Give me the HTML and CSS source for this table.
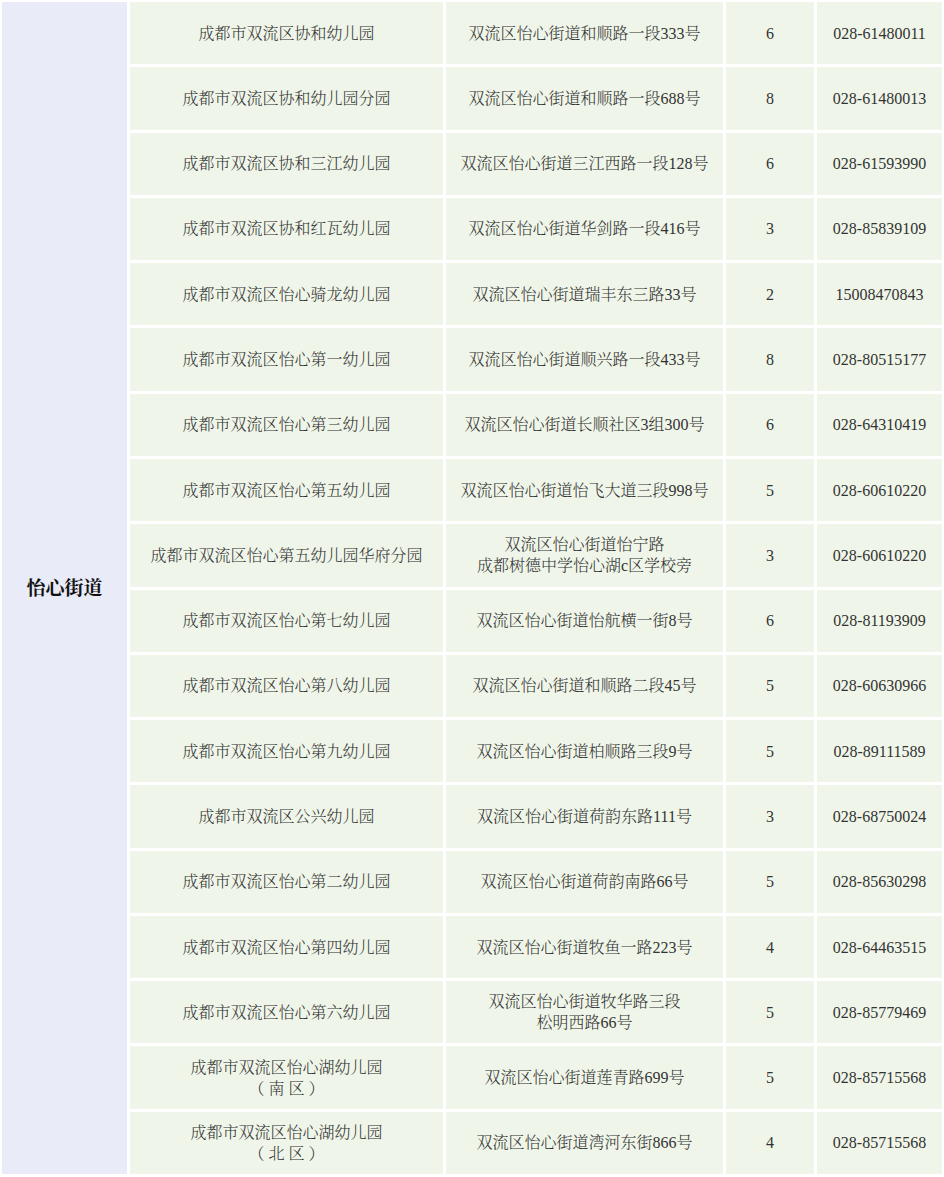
FILE: index.html
```html
<!DOCTYPE html>
<html lang="zh-CN">
<head>
<meta charset="utf-8">
<title>怡心街道幼儿园</title>
<link rel="stylesheet" href="styles.css">
</head>
<body>
<div class="grid">
  <div class="cell area">怡心街道</div>

  <div class="cell">成都市双流区协和幼儿园</div><div class="cell">双流区怡心街道和顺路一段333号</div><div class="cell">6</div><div class="cell">028-61480011</div>
  <div class="cell">成都市双流区协和幼儿园分园</div><div class="cell">双流区怡心街道和顺路一段688号</div><div class="cell">8</div><div class="cell">028-61480013</div>
  <div class="cell">成都市双流区协和三江幼儿园</div><div class="cell">双流区怡心街道三江西路一段128号</div><div class="cell">6</div><div class="cell">028-61593990</div>
  <div class="cell">成都市双流区协和红瓦幼儿园</div><div class="cell">双流区怡心街道华剑路一段416号</div><div class="cell">3</div><div class="cell">028-85839109</div>
  <div class="cell">成都市双流区怡心骑龙幼儿园</div><div class="cell">双流区怡心街道瑞丰东三路33号</div><div class="cell">2</div><div class="cell">15008470843</div>
  <div class="cell">成都市双流区怡心第一幼儿园</div><div class="cell">双流区怡心街道顺兴路一段433号</div><div class="cell">8</div><div class="cell">028-80515177</div>
  <div class="cell">成都市双流区怡心第三幼儿园</div><div class="cell">双流区怡心街道长顺社区3组300号</div><div class="cell">6</div><div class="cell">028-64310419</div>
  <div class="cell">成都市双流区怡心第五幼儿园</div><div class="cell">双流区怡心街道怡飞大道三段998号</div><div class="cell">5</div><div class="cell">028-60610220</div>
  <div class="cell">成都市双流区怡心第五幼儿园华府分园</div><div class="cell">双流区怡心街道怡宁路<br>成都树德中学怡心湖c区学校旁</div><div class="cell">3</div><div class="cell">028-60610220</div>
  <div class="cell">成都市双流区怡心第七幼儿园</div><div class="cell">双流区怡心街道怡航横一街8号</div><div class="cell">6</div><div class="cell">028-81193909</div>
  <div class="cell">成都市双流区怡心第八幼儿园</div><div class="cell">双流区怡心街道和顺路二段45号</div><div class="cell">5</div><div class="cell">028-60630966</div>
  <div class="cell">成都市双流区怡心第九幼儿园</div><div class="cell">双流区怡心街道柏顺路三段9号</div><div class="cell">5</div><div class="cell">028-89111589</div>
  <div class="cell">成都市双流区公兴幼儿园</div><div class="cell">双流区怡心街道荷韵东路111号</div><div class="cell">3</div><div class="cell">028-68750024</div>
  <div class="cell">成都市双流区怡心第二幼儿园</div><div class="cell">双流区怡心街道荷韵南路66号</div><div class="cell">5</div><div class="cell">028-85630298</div>
  <div class="cell">成都市双流区怡心第四幼儿园</div><div class="cell">双流区怡心街道牧鱼一路223号</div><div class="cell">4</div><div class="cell">028-64463515</div>
  <div class="cell">成都市双流区怡心第六幼儿园</div><div class="cell">双流区怡心街道牧华路三段<br>松明西路66号</div><div class="cell">5</div><div class="cell">028-85779469</div>
  <div class="cell"><div>成都市双流区怡心湖幼儿园<br><span class="paren">（南区）</span></div></div><div class="cell">双流区怡心街道莲青路699号</div><div class="cell">5</div><div class="cell">028-85715568</div>
  <div class="cell"><div>成都市双流区怡心湖幼儿园<br><span class="paren">（北区）</span></div></div><div class="cell">双流区怡心街道湾河东街866号</div><div class="cell">4</div><div class="cell">028-85715568</div>
</div>
</body>
</html>
```

FILE: styles.css
```css
html, body {
  margin: 0;
  padding: 0;
  background: #ffffff;
}

body {
  font-family: "Liberation Serif", "Noto Serif CJK SC", "Noto Sans CJK SC", serif;
  font-size: 16px;
  color: #333333;
}

.grid {
  display: grid;
  grid-template-columns: 125px 313px 277px 88px 125px;
  grid-template-rows: repeat(18, 1fr);
  gap: 3px;
  padding: 2px 2px 3px 2px;
  width: 944px;
  height: 1177px;
  box-sizing: border-box;
}

.cell {
  display: flex;
  align-items: center;
  justify-content: center;
  text-align: center;
  background: #eff6e9;
  line-height: 21px;
  font-weight: 300;
}

.paren {
  letter-spacing: 4px;
  margin-right: -4px;
}

.area {
  grid-row: 1 / span 18;
  background: #e9ecf8;
  font-size: 19px;
  font-weight: 700;
  color: #111111;
}
```
